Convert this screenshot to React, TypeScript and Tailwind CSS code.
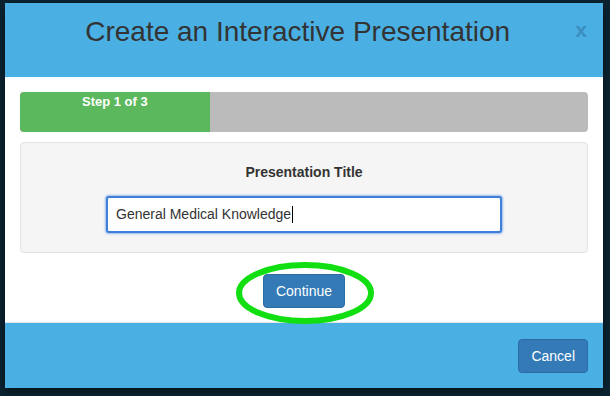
import React from "react";

export default function App() {
  return (
    <div
      className="w-[610px] h-[396px] overflow-hidden bg-[#0b2431] pt-[3px] pl-[5px]"
      style={{ fontFamily: '"Liberation Sans", Arial, sans-serif' }}
    >
      <div className="w-[598px] bg-white shadow-[0_3px_9px_rgba(0,0,0,0.5)]">
        {/* header */}
        <div className="h-[74px] bg-[#4aafe3] flex items-start pt-[9px] pl-[15px] pr-[16px]">
          <h4 className="flex-1 text-center text-[28px] leading-[40px] text-[#333]">
            Create an Interactive Presentation
          </h4>
          <span className="mt-[-2px] text-[21px] font-bold leading-[40px] text-[#3b8dbf]">x</span>
        </div>

        {/* body */}
        <div className="relative px-[15px] pt-[15px] pb-[14px]">
          <div className="flex h-[40px] rounded-[4px] bg-[#bbbbbb] overflow-hidden">
            <div className="w-[33.4%] bg-[#5cb85c] text-center text-[13px] font-bold leading-[20px] text-white">
              Step 1 of 3
            </div>
          </div>

          <div className="mt-[10px] rounded-[4px] border border-[#e3e3e3] bg-[#f5f5f5] p-[19px] flex flex-col items-center">
            <label className="text-[14px] font-bold leading-[20px] text-[#333]">Presentation Title</label>
            <div className="mt-[14px] flex h-[37px] w-[396px] items-center rounded-[3px] border-2 border-[#3f7fd9] bg-white px-[8px] text-[14px] text-[#333] shadow-[0_0_2px_1px_rgba(90,150,230,0.6)]">
              General Medical Knowledge
              <span className="ml-[1px] h-[17px] w-px bg-black" />
            </div>
          </div>

          <div className="mt-[21px] flex justify-center">
            <button className="h-[34px] rounded-[4px] border border-[#2e6da4] bg-[#337ab7] px-[12px] text-[14px] text-white">
              Continue
            </button>
          </div>

          <svg
            className="absolute left-[231px] top-[185px] pointer-events-none"
            width="138"
            height="62"
            viewBox="0 0 138 62"
          >
            <ellipse cx="69" cy="31" rx="66" ry="28" fill="none" stroke="#12df12" strokeWidth="6" />
          </svg>
        </div>

        {/* footer */}
        <div className="flex justify-end border-t border-[#e5e5e5] bg-[#4aafe3] pt-[16px] pb-[15px] pr-[15px]">
          <button className="h-[34px] rounded-[4px] border border-[#2e6da4] bg-[#337ab7] px-[12px] text-[14px] text-white">
            Cancel
          </button>
        </div>
      </div>
    </div>
  );
}
